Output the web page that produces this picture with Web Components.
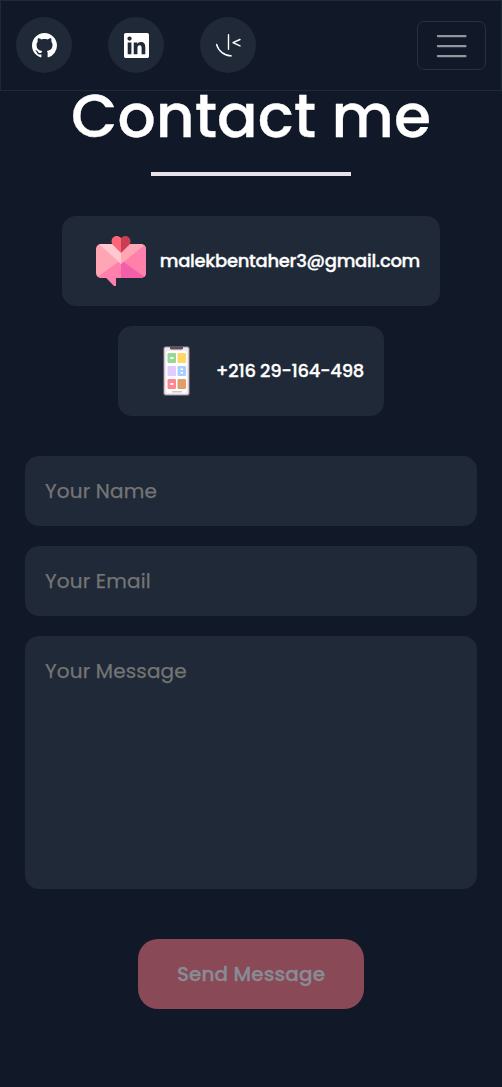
<!DOCTYPE html>
<html lang="en">
<head>
<meta charset="utf-8">
<title>Contact me</title>
<style>
html,body{margin:0;background:#111827}
body{font-family:Poppins,Inter,"Open Sans",sans-serif;font-weight:500;color:#fff;height:1087px;overflow:hidden}
</style>
</head>
<body>
<contact-page></contact-page>
<script>
const define=(name,html)=>customElements.define(name,class extends HTMLElement{
  constructor(){super();const t=document.createElement('template');t.innerHTML=html;
    this.attachShadow({mode:'open'}).append(t.content.cloneNode(true));}
});

define('round-link',`<style>
:host{display:block}
a{display:grid;place-items:center;width:56px;height:56px;border-radius:50%;background:#202937;color:#fff}
</style><a href="#"><slot></slot></a>`);

define('menu-toggle',`<style>
:host{display:block}
button{display:grid;place-items:center;box-sizing:border-box;width:69px;height:49px;padding:0;border:1px solid #282f3d;border-radius:7px;background:none}
svg{display:block}
</style><button aria-label="Menu"><svg width="40" height="40" viewBox="0 0 40 40"><path stroke="#fff" stroke-opacity=".55" stroke-linecap="round" stroke-width="2.4" d="M6 10.1h27.4M6 20.1h27.4M6 30.1h27.4"/></svg></button>`);

define('top-nav',`<style>
:host{display:flex;box-sizing:border-box;height:91px;border:1px solid #1f2937;background:#111827;padding:0 15px;align-items:center;justify-content:space-between}
div{display:flex;gap:36px;padding-bottom:1px}
svg{display:block}
</style><div>
<round-link><svg width="25" height="25" viewBox="0 0 16 16" fill="#fff"><path d="M8 0C3.58 0 0 3.58 0 8c0 3.54 2.29 6.53 5.47 7.59.4.07.55-.17.55-.38 0-.19-.01-.82-.01-1.49-2.01.37-2.53-.49-2.69-.94-.09-.23-.48-.94-.82-1.13-.28-.15-.68-.52-.01-.53.63-.01 1.08.58 1.23.82.72 1.21 1.87.87 2.33.66.07-.52.28-.87.51-1.07-1.78-.2-3.64-.89-3.64-3.95 0-.87.31-1.59.82-2.15-.08-.2-.36-1.02.08-2.12 0 0 .67-.21 2.2.82.64-.18 1.32-.27 2-.27s1.36.09 2 .27c1.53-1.04 2.2-.82 2.2-.82.44 1.1.16 1.92.08 2.12.51.56.82 1.27.82 2.15 0 3.07-1.87 3.75-3.65 3.95.29.25.54.73.54 1.48 0 1.07-.01 1.93-.01 2.2 0 .21.15.46.55.38A8.01 8.01 0 0 0 16 8c0-4.42-3.58-8-8-8"/></svg></round-link>
<round-link><svg width="25" height="25" viewBox="0 0 24 24" fill="#fff"><path d="M20.447 20.452h-3.554v-5.569c0-1.328-.027-3.037-1.852-3.037-1.853 0-2.136 1.445-2.136 2.939v5.667H9.351V9h3.414v1.561h.046c.477-.9 1.637-1.85 3.37-1.85 3.601 0 4.267 2.37 4.267 5.455v6.286zM5.337 7.433a2.062 2.062 0 1 1 0-4.125 2.062 2.062 0 0 1 0 4.125zm1.782 13.019H3.555V9h3.564v11.452zM22.225 0H1.771C.792 0 0 .774 0 1.729v20.542C0 23.227.792 24 1.771 24h20.451C23.2 24 24 23.227 24 22.271V1.729C24 .774 23.2 0 22.225 0z"/></svg></round-link>
<round-link><svg width="26" height="26" viewBox="0 0 26 26" fill="none" stroke="#fff" stroke-width="1.4" stroke-linecap="round" stroke-linejoin="round"><path d="M13.5 2.8v14.4M25 7.5l-7 3.2 7 3.2M1.6 12.5A15.5 15.5 0 0 0 16.3 23.9"/></svg></round-link>
</div><menu-toggle></menu-toggle>`);

define('page-title',`<style>
:host{display:flex;flex-direction:column;align-items:center}
h1{margin:0;font-size:60px;line-height:84px;height:90px;margin-top:-17px;font-weight:500;white-space:nowrap;-webkit-text-stroke:.3px #fff}
i{display:block;width:200px;height:4px;margin-top:8px;background:#e5e3e9}
</style><h1><slot></slot></h1><i></i>`);

define('contact-card',`<style>
:host{display:flex;box-sizing:border-box;height:90px;border-radius:14px;background:#202937;align-items:center;justify-content:space-between;padding:0 20px 0 34px;white-space:nowrap;font-size:18px;letter-spacing:-.3px}
span{padding-bottom:2px;-webkit-text-stroke:.3px #fff}
::slotted(svg){display:block}
</style><slot name="icon"></slot><span><slot></slot></span>`);

define('text-field',`<style>
:host{display:block;height:70px}
input{box-sizing:border-box;width:100%;height:100%;padding:0 20px;border:0;border-radius:14px;background:#202937;font:400 20px Poppins,Inter,sans-serif;letter-spacing:.15px;color:#fff}
input::placeholder{color:#757575;opacity:1;-webkit-text-stroke:.25px #757575}
</style><input>`);

define('message-field',`<style>
:host{display:block;height:253px}
textarea{display:block;box-sizing:border-box;width:100%;height:100%;padding:20px;border:0;border-radius:14px;background:#202937;font:400 20px/30px Poppins,Inter,sans-serif;letter-spacing:.15px;color:#fff;resize:none}
textarea::placeholder{color:#757575;opacity:1;-webkit-text-stroke:.25px #757575}
</style><textarea placeholder="Your Message"></textarea>`);

define('send-button',`<style>
:host{display:block}
button{width:226px;height:70px;padding:0;border:0;border-radius:20px;background:#894956;color:#888c94;font:500 20px Poppins,Inter,sans-serif;letter-spacing:.1px;-webkit-text-stroke:.3px #888c94}
</style><button><slot></slot></button>`);

define('contact-page',`<style>
:host{display:block}
top-nav{position:relative;z-index:1}
main{display:flex;flex-direction:column;align-items:center}
section{display:flex;flex-direction:column;align-items:center;gap:20px;margin-top:40px}
form{display:flex;flex-direction:column;gap:20px;width:452px;margin-top:40px}
send-button{margin:30px auto 0}
.mail{width:378px}.phone{width:266px;padding-left:33px}
</style>
<top-nav></top-nav><main>
<page-title>Contact me</page-title>
<section>
<contact-card class="mail"><svg slot="icon" width="50" height="50" viewBox="0 0 50 50"><defs><clipPath id="e"><rect y="8" width="50" height="34" rx="5"/></clipPath></defs>
<g clip-path="url(#e)"><path fill="#ffa5b3" d="M0 8h50v34H0z"/><path fill="#ff80ab" d="M50 8v34L25 28zM0 42l25-18v18z"/><path fill="#f35fa8" d="M25 24v18h25z"/><path fill="#ffc9cf" d="M3 8h39L25 28z"/><path fill="#ffa5b3" d="M25 28 47 8H33L25 17z"/></g>
<path fill="#ff80ab" d="M10 41.8h10V50h-2z"/><path fill="#ff6478" d="M25 17l-8-8c-4-5 1-11 6-8.5L25 2z"/><path fill="#c93e53" d="M25 17l8-8c4-5-1-11-6-8.5L25 2z"/></svg>malekbentaher3@gmail.com</contact-card>
<contact-card class="phone"><svg slot="icon" width="50" height="50" viewBox="0 0 50 50"><rect x="12.7" y=".7" width="25.6" height="48.6" rx="2" fill="#eee9ee" stroke="#685b67" stroke-width="1.1"/><rect x="15.2" y="5" width="20.6" height="42" rx="2" fill="#fff"/><path fill="#5d505c" d="M19 .5h13v1.9l-1 1H20l-1-1z"/>
<rect x="16.5" y="7" width="8.5" height="10" rx="1.2" fill="#96d894"/><rect x="26.5" y="7" width="8.5" height="10" rx="1.2" fill="#ffd766"/><rect x="16.5" y="20" width="8.5" height="10" rx="1.2" fill="#e3caff"/><rect x="26.5" y="20" width="8.5" height="10" rx="1.2" fill="#a4cfff"/><rect x="16.5" y="33" width="8.5" height="10" rx="1.2" fill="#ff858e"/><rect x="26.5" y="33" width="8.5" height="10" rx="1.2" fill="#dda06c"/>
<path fill="#fff" d="M19.3 11h3.2v2h-3.2zM29.6 22.5H32V24h-2.4zM29.6 26H32v1.5h-2.4zM19.3 37h3.2v2h-3.2z"/><path fill="#cbc7cc" d="M21 45h10v1.5H21z"/></svg>+216 29-164-498</contact-card>
</section>
<form><text-field id="name"></text-field><text-field id="email"></text-field><message-field></message-field><send-button>Send Message</send-button></form>
</main>`);
const page=document.querySelector('contact-page').shadowRoot;
page.getElementById('name').shadowRoot.querySelector('input').placeholder='Your Name';
page.getElementById('email').shadowRoot.querySelector('input').placeholder='Your Email';
</script>
</body>
</html>
